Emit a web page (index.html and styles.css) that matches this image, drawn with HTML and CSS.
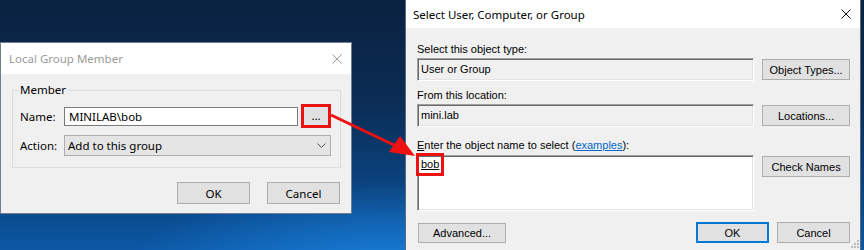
FILE: index.html
```html
<!DOCTYPE html>
<html lang="en">
<head>
  <meta charset="UTF-8" />
  <title>Local Group Member - Select User</title>
  <link rel="stylesheet" href="styles.css">
</head>
<body>
  <div class="desktop">

    <!-- Local Group Member (inactive) -->
    <section class="window member-dialog">
      <header class="titlebar inactive">
        <span class="title">Local Group Member</span>
        <svg class="close" width="10" height="10" viewBox="0 0 10 10"><path d="M0.5 0.5 L9.5 9.5 M9.5 0.5 L0.5 9.5" /></svg>
      </header>
      <div class="client">
        <fieldset class="group">
          <legend>Member</legend>
          <div class="field-row">
            <label class="field-label">Name:</label>
            <div class="textbox">MINILAB\bob</div>
            <button class="btn browse callout" type="button">...</button>
          </div>
          <div class="field-row">
            <label class="field-label">Action:</label>
            <div class="combo">
              <span>Add to this group</span>
              <svg class="chevron" width="9" height="5" viewBox="0 0 9 5"><path d="M0.5 0.5 L4.5 4.5 L8.5 0.5" /></svg>
            </div>
          </div>
        </fieldset>
        <div class="actions">
          <button class="btn" type="button">OK</button>
          <button class="btn" type="button">Cancel</button>
        </div>
      </div>
    </section>

    <!-- Select User, Computer, or Group (active) -->
    <section class="window picker-dialog">
      <header class="titlebar">
        <span class="title">Select User, Computer, or Group</span>
        <svg class="close" width="10" height="10" viewBox="0 0 10 10"><path d="M0.5 0.5 L9.5 9.5 M9.5 0.5 L0.5 9.5" /></svg>
      </header>
      <div class="client picker">
        <div class="picker-label">Select this object type:</div>
        <div class="picker-row">
          <div class="sunken readonly">User or Group</div>
          <button class="btn classic" type="button">Object Types...</button>
        </div>

        <div class="picker-label">From this location:</div>
        <div class="picker-row">
          <div class="sunken readonly">mini.lab</div>
          <button class="btn classic" type="button">Locations...</button>
        </div>

        <div class="picker-label names-label"><u>E</u>nter the object name to select (<a class="link">examples</a>):</div>
        <div class="picker-row names-row">
          <div class="sunken names"><span class="resolved callout">bob</span></div>
          <button class="btn classic" type="button">Check Names</button>
        </div>

        <div class="picker-footer">
          <button class="btn classic advanced" type="button">Advanced...</button>
          <div class="footer-right">
            <button class="btn classic default" type="button">OK</button>
            <button class="btn classic" type="button">Cancel</button>
          </div>
        </div>
        <svg class="grip" width="9" height="9" viewBox="0 0 9 9">
          <rect x="7" y="0" width="2" height="2" />
          <rect x="4" y="3" width="2" height="2" />
          <rect x="7" y="3" width="2" height="2" />
          <rect x="1" y="6" width="2" height="2" />
          <rect x="4" y="6" width="2" height="2" />
          <rect x="7" y="6" width="2" height="2" />
        </svg>
      </div>
    </section>

    <!-- red annotation arrow -->
    <svg class="arrow" width="864" height="250" viewBox="0 0 864 250">
      <line x1="331" y1="115" x2="396" y2="146" />
      <polygon points="389,152 400,136 415,156" />
    </svg>
  </div>
</body>
</html>
```

FILE: styles.css
```css
body {
  margin: 0;
  padding: 0;
}

.desktop {
  position: relative;
  width: 864px;
  height: 250px;
  overflow: hidden;
  background:
    radial-gradient(ellipse 260px 90px at 390px 270px, rgba(30, 140, 235, 0.75), transparent),
    linear-gradient(180deg, #0a2140 0%, #0b2c54 40%, #0b4888 82%, #0c58a6 100%);
}

/* windows on the desktop */
.window {
  position: absolute;
  box-sizing: border-box;
  display: flex;
  flex-direction: column;
  background: #f0f0f0;
  border: 1px solid #6f7f90;
}

.member-dialog {
  left: 0;
  top: 42px;
  width: 352px;
  height: 172px;
  font-family: "Noto Sans", "Open Sans", sans-serif;
  font-size: 11.5px;
}

.picker-dialog {
  left: 405px;
  top: -1px;
  width: 456px;
  height: 270px;
  font-family: "Liberation Sans", Arial, sans-serif;
  font-size: 11px;
  border-color: #5a6a7a;
}

.titlebar {
  display: flex;
  align-items: center;
  justify-content: space-between;
  background: #fff;
  color: #000;
  padding: 0 9px 0 7px;
}

.member-dialog .titlebar {
  height: 31px;
  padding-left: 8px;
}

.picker-dialog .titlebar {
  height: 28px;
}

.titlebar .title {
  font-family: "Noto Sans", "Open Sans", sans-serif;
  font-size: 11.5px;
}

.titlebar.inactive .title {
  color: #999;
}

.close path {
  stroke: #111;
  stroke-width: 1;
  fill: none;
}

.titlebar.inactive .close path {
  stroke: #999;
}

.client {
  flex: 1;
  padding: 8px 10px 0 11px;
}

/* group box */
.group {
  margin: 0;
  padding: 6px 9px 10px 7px;
  border: 1px solid #dcdcdc;
  border-radius: 0;
}

.group legend {
  padding: 0 1px;
  margin-left: -1px;
  line-height: 16px;
  color: #000;
}

.field-row {
  display: flex;
  align-items: center;
  height: 24px;
}

.field-row + .field-row {
  margin-top: 5px;
}

.field-label {
  width: 44px;
  color: #000;
}

.textbox {
  box-sizing: border-box;
  width: 234px;
  height: 19px;
  line-height: 17px;
  padding-left: 4px;
  background: #fff;
  border: 1px solid #7a7a7a;
}

.combo {
  box-sizing: border-box;
  display: flex;
  align-items: center;
  justify-content: space-between;
  width: 267px;
  height: 21px;
  padding: 0 4px 0 3px;
  background: #e5e5e5;
  border: 1px solid #acacac;
}

.chevron path {
  stroke: #555;
  stroke-width: 1;
  fill: none;
}

.btn {
  box-sizing: border-box;
  font: inherit;
  color: #000;
  background: #e1e1e1;
  border: 1px solid #adadad;
  padding: 0;
  height: 22px;
}

.browse {
  width: 30px;
  height: 24px;
  margin-left: 3px;
  line-height: 14px;
}

.callout {
  outline: 3px solid #ee1111;
}

.browse.callout {
  outline-offset: -3px;
}

.actions {
  display: flex;
  justify-content: flex-end;
  gap: 17px;
  margin-top: 14px;
  padding-right: 1px;
}

.actions .btn {
  width: 73px;
}

/* object picker */
.picker {
  position: relative;
  padding: 14px 10px 0 11px;
}

.picker-label {
  line-height: 14px;
  color: #000;
}

.picker-label .link {
  color: #0066cc;
  text-decoration: underline;
}

.names-label {
  padding-top: 4px;
}

.picker-row {
  display: flex;
  align-items: flex-start;
  gap: 8px;
  margin-top: 2px;
  margin-bottom: 7px;
}

.sunken {
  box-sizing: border-box;
  width: 338px;
  height: 23px;
  padding: 2px 3px;
  line-height: 17px;
  border: 1px solid;
  border-color: #a0a0a0 #fff #fff #a0a0a0;
  box-shadow: inset 1px 1px #696969, inset -1px -1px #e3e3e3;
}

.sunken.readonly {
  background: #f0f0f0;
}

.sunken.names {
  height: 56px;
  background: #fff;
  line-height: 13px;
  padding-top: 2px;
}

.resolved {
  display: inline-block;
  text-decoration: underline;
  outline-offset: 2px;
}

.btn.classic {
  width: 88px;
  height: 21px;
  margin-top: 1px;
}

.names-row {
  margin-top: 3px;
  margin-bottom: 10px;
}

.picker-footer {
  display: flex;
  justify-content: space-between;
  align-items: center;
}

.btn.advanced {
  width: 88px;
  height: 20px;
  margin-left: 1px;
}

.footer-right {
  display: flex;
  gap: 8px;
}

.footer-right .btn {
  width: 73px;
}

.btn.default {
  border: 2px solid #0078d7;
}

.grip {
  position: absolute;
  right: 1px;
  top: 212px;
}

.grip rect {
  fill: #bcbcbc;
}

/* annotation */
.arrow {
  position: absolute;
  left: 0;
  top: 0;
  pointer-events: none;
}

.arrow line {
  stroke: #ee1111;
  stroke-width: 3;
}

.arrow polygon {
  fill: #ee1111;
}
```
